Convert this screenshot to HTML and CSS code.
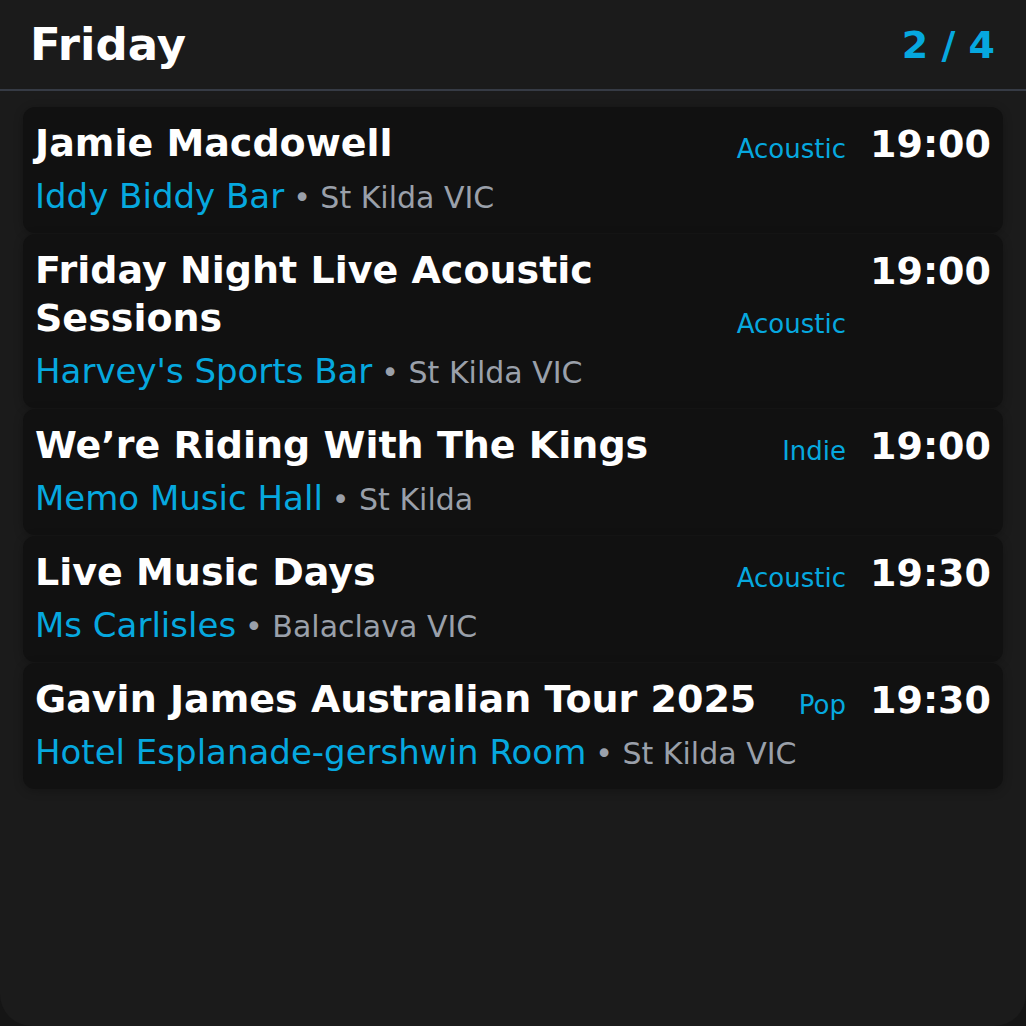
FILE: index.html
```html
<!DOCTYPE html>
<html lang="en">
<head>
<meta charset="utf-8">
<title>Friday</title>
<link rel="stylesheet" href="styles.css">
</head>
<body>
<div class="screen">
  <header class="header">
    <h1 class="day">Friday</h1>
    <div class="page">2 / 4</div>
  </header>
  <main class="list">
    <article class="card">
      <div class="row">
        <div class="title">Jamie Macdowell</div>
        <div class="tag">Acoustic</div>
        <div class="time">19:00</div>
      </div>
      <div class="where"><span class="venue">Iddy Biddy Bar</span><span class="loc">• St Kilda VIC</span></div>
    </article>
    <article class="card">
      <div class="row">
        <div class="title">Friday Night Live Acoustic Sessions</div>
        <div class="tag">Acoustic</div>
        <div class="time">19:00</div>
      </div>
      <div class="where"><span class="venue">Harvey's Sports Bar</span><span class="loc">• St Kilda VIC</span></div>
    </article>
    <article class="card">
      <div class="row">
        <div class="title">We’re Riding With The Kings</div>
        <div class="tag">Indie</div>
        <div class="time">19:00</div>
      </div>
      <div class="where"><span class="venue">Memo Music Hall</span><span class="loc">• St Kilda</span></div>
    </article>
    <article class="card">
      <div class="row">
        <div class="title">Live Music Days</div>
        <div class="tag">Acoustic</div>
        <div class="time">19:30</div>
      </div>
      <div class="where"><span class="venue">Ms Carlisles</span><span class="loc">• Balaclava VIC</span></div>
    </article>
    <article class="card">
      <div class="row">
        <div class="title">Gavin James Australian Tour 2025</div>
        <div class="tag">Pop</div>
        <div class="time">19:30</div>
      </div>
      <div class="where"><span class="venue">Hotel Esplanade-gershwin Room</span><span class="loc">• St Kilda VIC</span></div>
    </article>
  </main>
</div>
</body>
</html>
```
FILE: styles.css
```css
html, body {
  margin: 0;
  padding: 0;
  background: #151515;
}
body {
  font-family: "DejaVu Sans", "Liberation Sans", sans-serif;
  color: #ffffff;
}
.screen {
  box-sizing: border-box;
  width: 1026px;
  height: 1026px;
  background: #1b1b1b;
  border-radius: 0 0 32px 32px;
  overflow: hidden;
}
.header {
  height: 89px;
  display: flex;
  align-items: center;
  justify-content: space-between;
  padding: 0 31px 0 30px;
  border-bottom: 2px solid #363b45;
}
.day {
  margin: 0;
  font-size: 45px;
  font-weight: 700;
  color: #ffffff;
}
.page {
  font-size: 38px;
  font-weight: 700;
  color: #06a8df;
}
.list {
  display: flex;
  flex-direction: column;
  gap: 1px;
  padding: 16px 23px 0;
}
.card {
  background: #111111;
  border-radius: 12px;
  padding: 12px 12px 17px;
  box-shadow: 0 2px 10px rgba(0, 0, 0, 0.25);
}
.row {
  display: flex;
  align-items: flex-end;
  gap: 24px;
}
.title {
  flex: 1;
  font-size: 38px;
  line-height: 48px;
  font-weight: 700;
  color: #ffffff;
}
.tag {
  font-size: 26px;
  line-height: 36px;
  color: #06a8df;
}
.time {
  align-self: flex-start;
  margin: 1px 0 -1px;
  font-size: 38px;
  line-height: 48px;
  font-weight: 700;
  color: #ffffff;
}
.where {
  margin-top: 9px;
  font-size: 34px;
  line-height: 40px;
  height: 40px;
}
.venue {
  color: #06a8df;
}
.loc {
  margin-left: 9px;
  font-size: 30px;
  line-height: 30px;
  color: #9aa0aa;
}
```
